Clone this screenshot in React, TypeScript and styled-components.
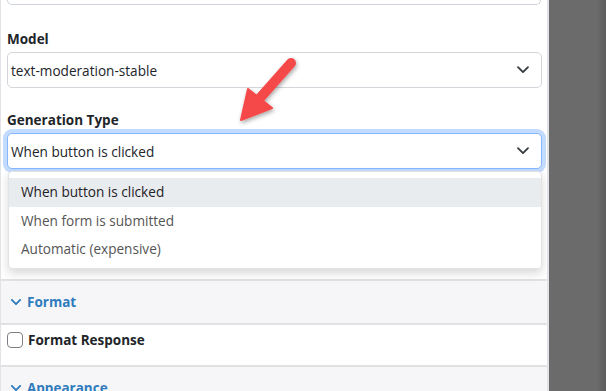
import React from 'react';
import styled, { createGlobalStyle } from 'styled-components';

const GlobalStyle = createGlobalStyle`
  html, body {
    margin: 0;
    height: 100%;
    overflow: hidden;
  }
  body {
    font-family: 'Open Sans', 'Noto Sans', sans-serif;
    color: #212529;
  }
`;

const options = ['When button is clicked', 'When form is submitted', 'Automatic (expensive)'];

const Chevron: React.FC<{ color?: string; size?: number; stroke?: number }> = ({
  color = '#343a40',
  size = 12,
  stroke = 1.8,
}) => (
  <svg width={size} height={size * 0.6} viewBox='0 0 12 7' fill='none'>
    <path d='M1 1l5 5 5-5' stroke={color} strokeWidth={stroke} strokeLinecap='round' strokeLinejoin='round' />
  </svg>
);

const App: React.FC = () => {
  return (
    <Page>
      <GlobalStyle />
      <Panel>
        <TopStub />
        <Group $top={24}>
          <Label>Model</Label>
          <SelectBox>
            <span>text-moderation-stable</span>
            <Chevron />
          </SelectBox>
        </Group>
        <Group $top={22} $bottom={110}>
          <Label>Generation Type</Label>
          <SelectWrap>
            <SelectBox $focused>
              <span>When button is clicked</span>
              <Chevron />
            </SelectBox>
            <Menu>
              {options.map((o, i) => (
                <MenuItem key={o} $active={i === 0}>
                  {o}
                </MenuItem>
              ))}
            </Menu>
          </SelectWrap>
        </Group>
        <SectionHeader>
          <Chevron color='#2f7bbd' size={10} stroke={2.2} />
          Format
        </SectionHeader>
        <SectionBody>
          <Checkbox />
          <CheckLabel>Format Response</CheckLabel>
        </SectionBody>
        <SectionHeader>
          <Chevron color='#2f7bbd' size={10} stroke={2.2} />
          Appearance
        </SectionHeader>
        <Arrow width='80' height='80' viewBox='0 0 80 80'>
          <defs>
            <filter id='arrowShadow' x='-30%' y='-30%' width='160%' height='160%'>
              <feDropShadow dx='1' dy='2' stdDeviation='2' floodColor='#000' floodOpacity='0.35' />
            </filter>
          </defs>
          <g filter='url(#arrowShadow)' transform='translate(-225 -50)'>
            <path d='M290 63 L259 98' stroke='#f54848' strokeWidth='10' strokeLinecap='round' />
            <path d='M240 120 L247 89 L271 108 Z' fill='#f54848' stroke='#f54848' strokeWidth='2' strokeLinejoin='round' />
          </g>
        </Arrow>
      </Panel>
      <Backdrop />
    </Page>
  );
};

const Page = styled.div`
  display: flex;
  height: 391px;
  width: 606px;
`;

const Panel = styled.div`
  position: relative;
  width: 549px;
  flex-shrink: 0;
  box-sizing: border-box;
  background: #fff;
  border-left: 1px solid #e2e3e7;
  border-right: 2px solid #e2e3e7;
  overflow: hidden;
`;

const Backdrop = styled.div`
  flex: 1;
  background: linear-gradient(to right, #6b6b6b 0%, #6b6b6b 84%, #5d5d5d 100%);
`;

const TopStub = styled.div`
  height: 4px;
  margin: 0 6px;
  border: 1px solid #ced4da;
  border-top: none;
  border-radius: 0 0 5px 5px;
`;

const Group = styled.div<{ $top: number; $bottom?: number }>`
  padding: ${(p) => p.$top}px 5px ${(p) => p.$bottom ?? 0}px 6px;
`;

const Label = styled.div`
  font-size: 13.5px;
  font-weight: 700;
  line-height: 20px;
  margin-bottom: 3px;
  color: #212529;
`;

const SelectWrap = styled.div`
  position: relative;
`;

const SelectBox = styled.div<{ $focused?: boolean }>`
  display: flex;
  align-items: center;
  justify-content: space-between;
  box-sizing: border-box;
  height: 36px;
  padding: 0 12px 0 3px;
  font-size: 13.6px;
  color: #212529;
  border: 1px solid ${(p) => (p.$focused ? '#86b7fe' : '#d2d5da')};
  border-radius: 5px;
  background: #fff;
  box-shadow: ${(p) => (p.$focused ? '0 0 0 4px rgba(13, 110, 253, 0.25)' : 'none')};
`;

const Menu = styled.div`
  position: absolute;
  top: calc(100% + 2px);
  left: 1px;
  right: 0;
  padding: 6px 0 4px;
  background: #fff;
  border: 1px solid #e3e3e3;
  border-radius: 4px;
  box-shadow: 0 4px 10px rgba(0, 0, 0, 0.16);
  z-index: 2;
`;

const MenuItem = styled.div<{ $active?: boolean }>`
  height: 28.5px;
  line-height: 28.5px;
  padding-left: 12px;
  font-size: 13.6px;
  color: ${(p) => (p.$active ? '#1e2125' : '#555')};
  background: ${(p) => (p.$active ? '#e9ecef' : 'transparent')};
`;

const SectionHeader = styled.div`
  display: flex;
  align-items: center;
  gap: 6px;
  height: 42px;
  padding-left: 10px;
  border-top: 2px solid #e1e1e3;
  background: #f6f6f8;
  color: #2f7bbd;
  font-size: 13.5px;
  font-weight: 700;
`;

const SectionBody = styled.div`
  display: flex;
  align-items: center;
  gap: 5px;
  height: 42px;
  box-sizing: border-box;
  padding: 0 0 10px 6px;
  border-top: 2px solid #e1e1e3;
  background: #fff;
`;

const Checkbox = styled.span`
  width: 16px;
  height: 16px;
  box-sizing: border-box;
  border: 1px solid #7d7f82;
  border-radius: 4px;
  background: #fff;
`;

const CheckLabel = styled.span`
  font-size: 13.5px;
  font-weight: 700;
  color: #212529;
`;

const Arrow = styled.svg`
  position: absolute;
  left: 225px;
  top: 50px;
  pointer-events: none;
  z-index: 3;
`;

export default App;
